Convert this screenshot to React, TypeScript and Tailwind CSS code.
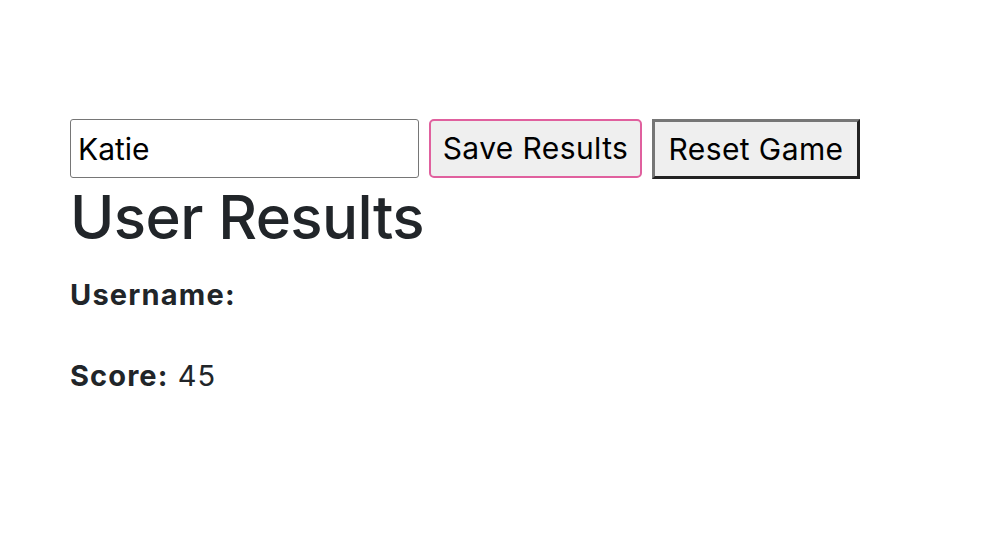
export default function App() {
  return (
    <div className="min-h-screen bg-white pl-[70px] pt-[119px] font-['Inter',sans-serif] text-[#212529]">
      <div className="flex items-start gap-[10px]">
        <input
          className="h-[59px] w-[349px] rounded-[3px] border border-[#767676] bg-white px-[7px] text-[30px] text-black outline-none"
          defaultValue="Katie"
        />
        <button
          type="button"
          className="h-[59px] w-[213px] rounded-[5px] border-2 border-[#e0609e] bg-[#efefef] text-[30px] tracking-[0.4px] text-black"
        >
          Save Results
        </button>
        <button
          type="button"
          className="h-[60px] w-[208px] border-[3px] border-t-[#767676] border-l-[#767676] border-r-[#222] border-b-[#222] bg-[#efefef] text-[30px] tracking-[0.4px] text-black"
        >
          Reset Game
        </button>
      </div>

      <h1 className="mt-[2px] text-[60px] font-medium leading-[1.2] tracking-[-0.6px]">User Results</h1>
      <p className="mt-[23px] text-[29px] font-bold leading-[1.3] tracking-[1.2px]">Username:</p>
      <p className="mt-[43px] text-[29px] leading-[1.3] tracking-[1.1px]">
        <span className="font-bold">Score:</span> 45
      </p>
    </div>
  );
}
